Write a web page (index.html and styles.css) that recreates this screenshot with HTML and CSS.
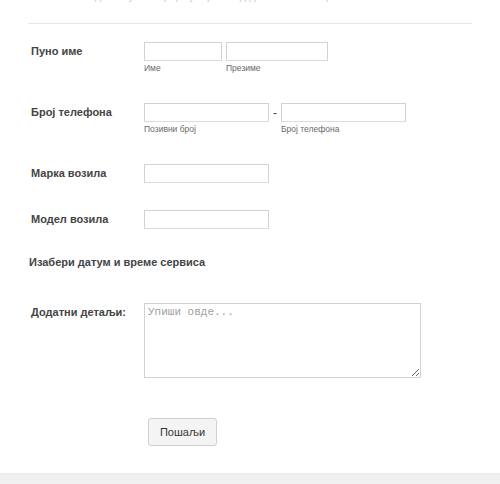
FILE: index.html
```html
<!DOCTYPE html>
<html lang="sr">
<head>
<meta charset="utf-8">
<title>Заказивање сервиса</title>
<link rel="stylesheet" href="styles.css">
</head>
<body>
<form class="form">
  <div class="intro"><p class="intro-text">Молимо вас да попуните формулар испод да закажете сервис.</p></div>
  <div class="row row-name">
    <label class="label">Пуно име</label>
    <div class="fields">
      <div class="sub">
        <input class="input w-first" type="text">
        <span class="sublabel">Име</span>
      </div>
      <div class="sub">
        <input class="input w-last" type="text">
        <span class="sublabel">Презиме</span>
      </div>
    </div>
  </div>
  <div class="row row-phone">
    <label class="label">Број телефона</label>
    <div class="fields">
      <div class="sub">
        <input class="input w-mid" type="text">
        <span class="sublabel">Позивни број</span>
      </div>
      <span class="dash">-</span>
      <div class="sub">
        <input class="input w-mid" type="text">
        <span class="sublabel">Број телефона</span>
      </div>
    </div>
  </div>
  <div class="row row-make">
    <label class="label">Марка возила</label>
    <input class="input w-mid" type="text">
  </div>
  <div class="row row-model">
    <label class="label">Модел возила</label>
    <input class="input w-mid" type="text">
  </div>
  <div class="heading">Изабери датум и време сервиса</div>
  <div class="row row-details">
    <label class="label label-top">Додатни детаљи:</label>
    <textarea class="textarea" placeholder="Упиши овде..."></textarea>
  </div>
  <div class="row-submit">
    <button class="button" type="button">Пошаљи</button>
  </div>
</form>
</body>
</html>
```
FILE: styles.css
```css
html, body {
  margin: 0;
  padding: 0;
}
body {
  background: #f0f0f0;
  font-family: "Liberation Sans", Arial, sans-serif;
  width: 500px;
  height: 484px;
  overflow: hidden;
}
.form {
  background: #fff;
  padding: 0 28px 28px 28px;
  height: 473px;
  box-sizing: border-box;
  box-shadow: 0 1px 2px rgba(0,0,0,0.04);
}
.intro {
  height: 23px;
  overflow: hidden;
  border-bottom: 1px solid #e6e6e6;
}
.intro-text {
  margin: -10px 0 0 2px;
  font-size: 11px;
  line-height: 13px;
  color: #cccccc;
  white-space: nowrap;
}
.row {
  display: flex;
  align-items: flex-start;
}
.label {
  width: 116px;
  flex: none;
  padding-left: 3px;
  box-sizing: border-box;
  font-size: 11px;
  font-weight: bold;
  line-height: 19px;
  color: #444;
}
.fields {
  display: flex;
  align-items: flex-start;
}
.sub {
  display: flex;
  flex-direction: column;
}
.row-name .sub + .sub {
  margin-left: 4px;
}
.input {
  height: 19px;
  box-sizing: border-box;
  border: 1px solid #d2d2d2;
  border-bottom-color: #dcdcdc;
  padding: 0 3px;
  margin: 0;
  font: 12px "Liberation Sans", Arial, sans-serif;
  background: #fff;
  outline: none;
}
.w-first { width: 78px; }
.w-last { width: 102px; }
.w-mid { width: 125px; }
.sublabel {
  font-size: 8.5px;
  line-height: 12px;
  margin-top: 1px;
  color: #6a6a6a;
}
.dash {
  width: 12px;
  text-align: center;
  font-size: 12px;
  line-height: 21px;
  color: #444;
}
.row-name { padding-top: 18px; }
.row-phone { margin-top: 29px; }
.row-make { margin-top: 29px; }
.row-model { margin-top: 27px; }
.heading {
  margin-top: 26px;
  padding-left: 1px;
  font-size: 11px;
  font-weight: bold;
  line-height: 14px;
  color: #444;
}
.row-details { margin-top: 34px; }
.label-top {
  line-height: 16px;
  padding-top: 1px;
}
.textarea {
  width: 277px;
  height: 75px;
  box-sizing: border-box;
  border: 1px solid #d2d2d2;
  margin: 0;
  padding: 2px 3px;
  font: 11px "Liberation Mono", "Courier New", monospace;
  color: #444;
  background: #fff;
  outline: none;
}
.textarea::placeholder {
  color: #a0a0a0;
}
.row-submit {
  margin-top: 40px;
  padding-left: 120px;
}
.button {
  width: 69px;
  height: 28px;
  margin: 0;
  border: 1px solid #cfcfcf;
  border-radius: 3px;
  background: #f4f4f4;
  font: 11px "Liberation Sans", Arial, sans-serif;
  color: #333;
  padding: 0;
}
```
